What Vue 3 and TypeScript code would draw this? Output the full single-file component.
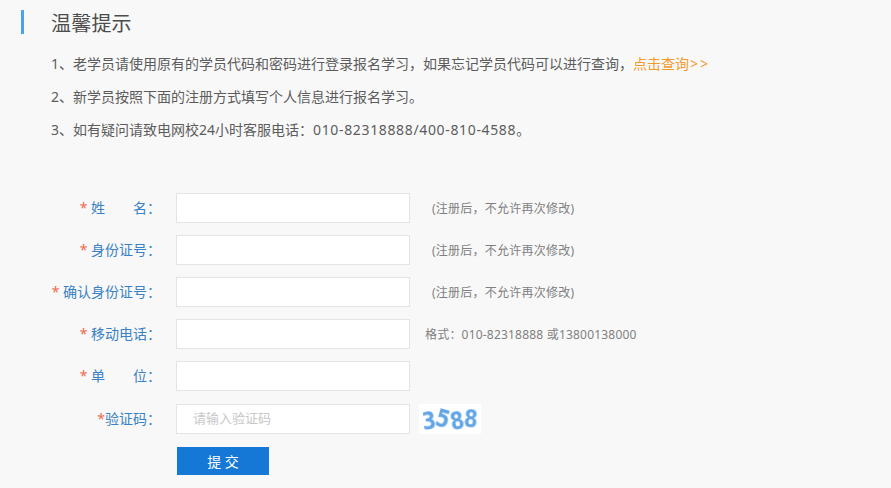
<script setup lang="ts">
interface Row { label: string; star: string; note?: string; noteClass?: string }
const rows: Row[] = [
  { label: '姓　　名', star: '* ', note: '(注册后，不允许再次修改)', noteClass: 'note' },
  { label: '身份证号', star: '* ', note: '(注册后，不允许再次修改)', noteClass: 'note' },
  { label: '确认身份证号', star: '* ', note: '(注册后，不允许再次修改)', noteClass: 'note' },
  { label: '移动电话', star: '* ', note: '格式：010-82318888 或13800138000', noteClass: 'note fmt' },
  { label: '单　　位', star: '* ' },
]
const digits = [
  { c: '3', r: -8, y: 1 }, { c: '5', r: 16, y: -1 }, { c: '8', r: -12, y: 1 }, { c: '8', r: 5, y: -1 },
]
</script>

<template>
  <main class="page">
    <header class="head">
      <span class="bar"></span>
      <h1 class="title">温馨提示</h1>
    </header>
    <div class="tips">
      <p>1、老学员请使用原有的学员代码和密码进行登录报名学习，如果忘记学员代码可以进行查询，<a class="link">点击查询<span class="arrows">&gt;&gt;</span></a></p>
      <p>2、新学员按照下面的注册方式填写个人信息进行报名学习。</p>
      <p>3、如有疑问请致电网校24小时客服电话：<span class="tel">010-82318888/400-810-4588</span>。</p>
    </div>
    <form class="form" @submit.prevent>
      <div v-for="r in rows" :key="r.label" class="row">
        <label class="label"><span class="star">{{ r.star }}</span>{{ r.label }}：</label>
        <input class="field" type="text" />
        <span v-if="r.note" :class="r.noteClass">{{ r.note }}</span>
      </div>
      <div class="row code-row">
        <label class="label"><span class="star">*</span>验证码：</label>
        <input class="field code" type="text" placeholder="请输入验证码" />
        <span class="captcha">
          <span
            v-for="(d, i) in digits"
            :key="i"
            class="digit"
            :style="{ transform: `translateY(${d.y}px) rotate(${d.r}deg) scaleY(1.25)` }"
          >{{ d.c }}</span>
        </span>
      </div>
      <button class="submit" type="button">提 交</button>
    </form>
  </main>
</template>

<style>
html, body { margin: 0; background: #f8f8f8; }
</style>

<style scoped>
.page {
  width: 891px;
  height: 488px;
  overflow: hidden;
  box-sizing: border-box;
  padding: 10px 0 0 21px;
  background: #f8f8f8;
  font-family: "Noto Sans", "Noto Sans CJK SC", sans-serif;
  color: #5c5c5c;
}
.head { display: flex; align-items: center; height: 24px; }
.bar { width: 3px; height: 24px; background: #4da3ea; }
.title {
  margin: 0 0 0 27px;
  padding-top: 3px;
  font-size: 20px;
  font-weight: 400;
  line-height: 28px;
  letter-spacing: 0.2px;
  color: #4c4c4c;
}
.tips { margin: 13px 0 0 30px; font-size: 14px; line-height: 33px; }
.tips p { margin: 0; white-space: nowrap; }
.tel { letter-spacing: 0.65px; }
.link { color: #f39a2d; }
.arrows { letter-spacing: 2px; margin-left: 1px; }
.form { margin-top: 47px; margin-left: -21px; }
.row { display: flex; align-items: center; height: 30px; margin-bottom: 12px; }
.code-row { margin-top: 13px; margin-bottom: 13px; }
.row:nth-child(5) { margin-bottom: 0; }
.label {
  width: 161px;
  margin-right: 15px;
  padding-bottom: 2px;
  text-align: right;
  white-space: pre;
  font-size: 14px;
  color: #3a82c4;
}
.star { color: #ee6a50; }
.field {
  box-sizing: border-box;
  width: 234px;
  height: 30px;
  padding: 0 16px 3px;
  border: 1px solid #e4e4e4;
  background: #fff;
  font-size: 13px;
  font-family: inherit;
  outline: none;
}
.field::placeholder { color: #c8c8c8; }
.note { margin-left: 22px; font-size: 12px; letter-spacing: 0.25px; color: #808080; white-space: nowrap; }
.fmt { margin-left: 15px; letter-spacing: 0.2px; }
.captcha {
  display: flex;
  justify-content: center;
  align-items: center;
  width: 62px;
  height: 30px;
  margin-left: 9px;
  background: #fff;
  font-family: "DejaVu Sans", sans-serif;
  font-size: 20px;
  font-weight: 700;
  line-height: 30px;
  color: #64a6e4;
}
.digit { display: inline-block; width: 14px; text-align: center; filter: blur(0.6px); }
.submit {
  display: block;
  width: 92px;
  height: 28px;
  margin: 0 0 0 177px;
  padding: 0;
  border: 0;
  background: #1577d6;
  color: #fff;
  font-size: 14px;
  font-family: inherit;
}
</style>
